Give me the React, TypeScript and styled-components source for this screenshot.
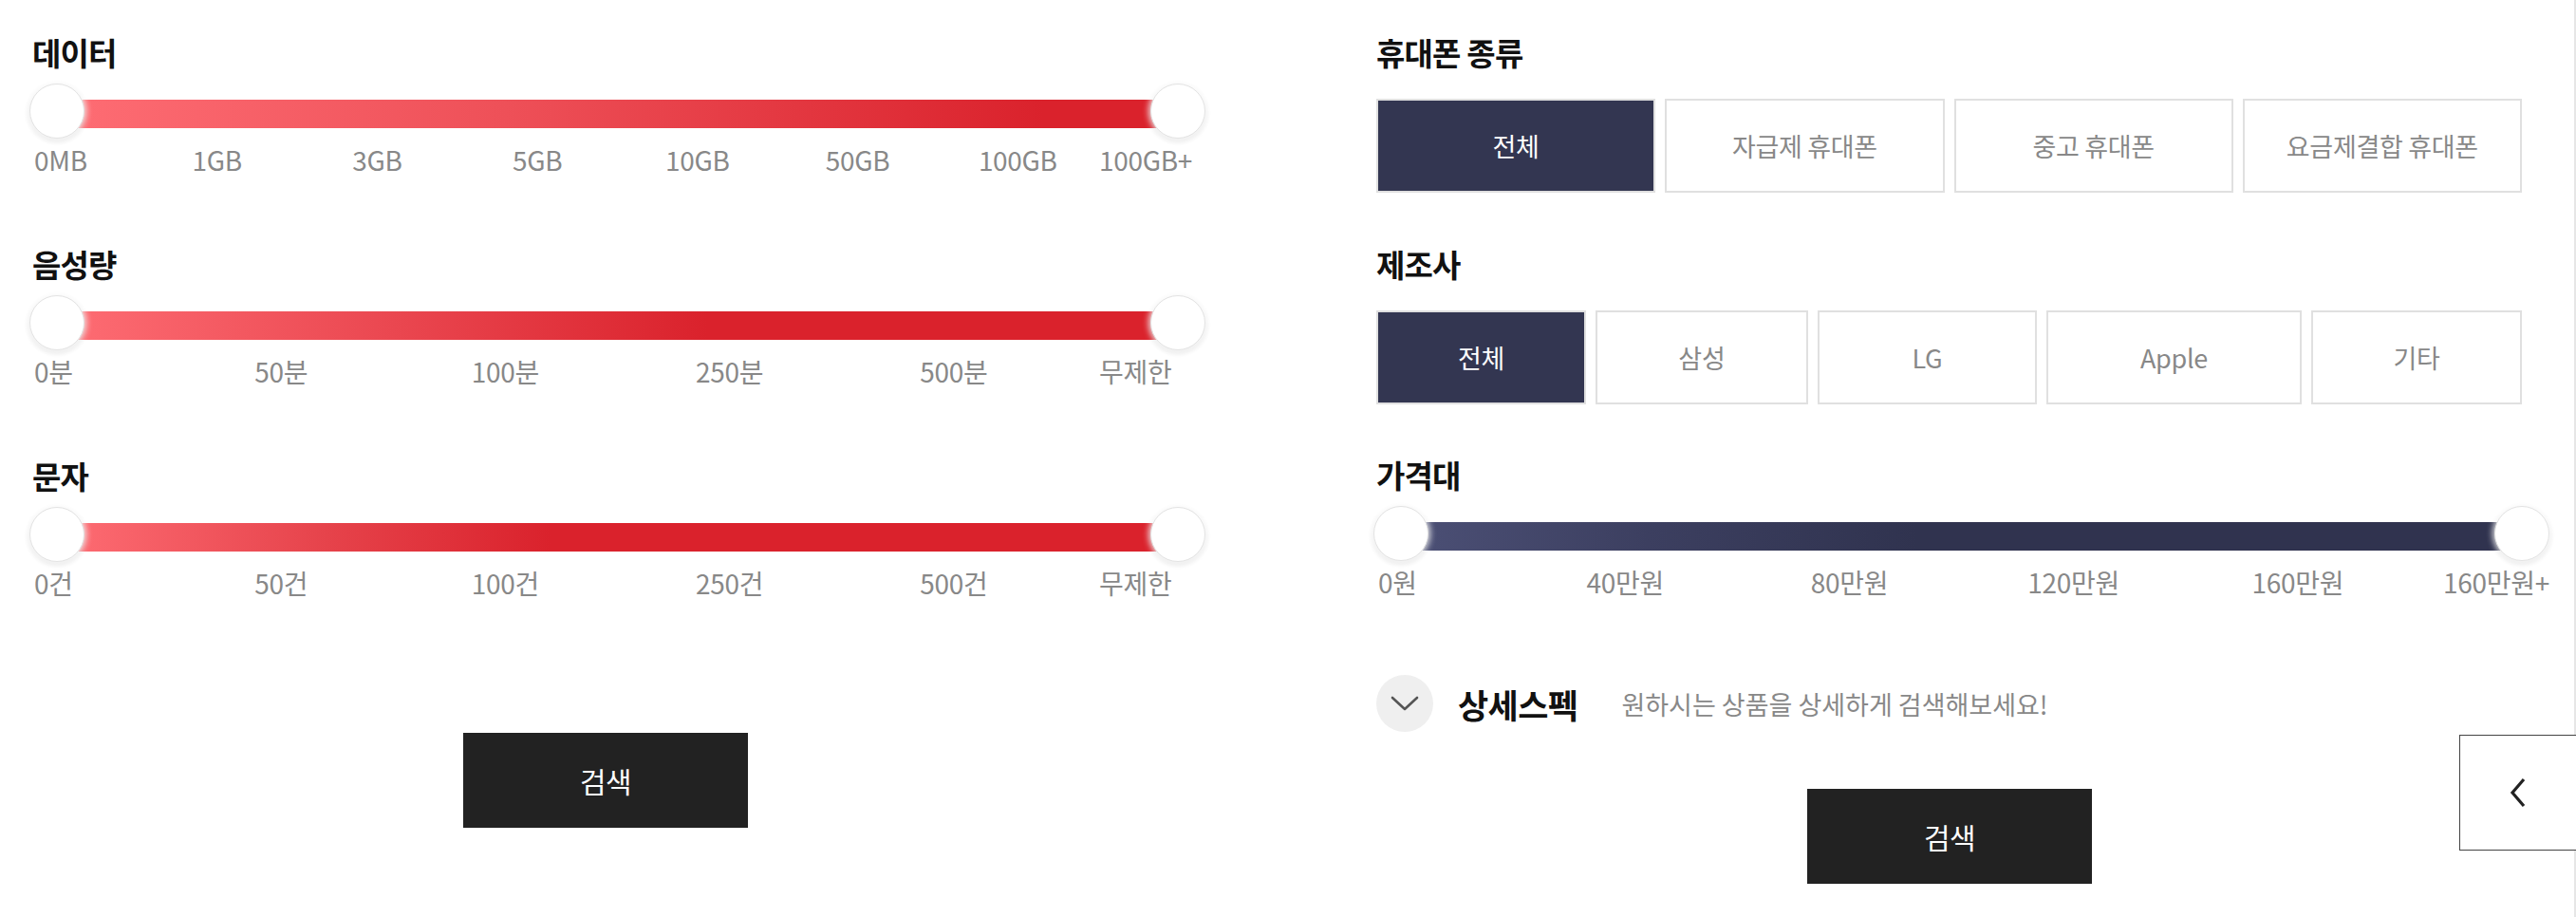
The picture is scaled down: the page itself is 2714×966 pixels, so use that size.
import React from 'react';
import styled, { createGlobalStyle } from 'styled-components';

const GlobalStyle = createGlobalStyle`
  html, body {
    margin: 0;
    padding: 0;
    background: #fff;
  }
  body {
    font-family: 'Noto Sans CJK KR', 'Noto Sans', sans-serif;
    color: #111;
  }
  * {
    box-sizing: border-box;
  }
`;

const TRACK_WIDTH = 1239;
const THUMB = 58;

interface SliderData {
  title: string;
  labels: string[];
  fill: string;
}

const lineSliders: SliderData[] = [
  {
    title: '데이터',
    labels: ['0MB', '1GB', '3GB', '5GB', '10GB', '50GB', '100GB', '100GB+'],
    fill: 'linear-gradient(90deg, #fe6d74 0%, #ee5058 40%, #da222c 88%)',
  },
  {
    title: '음성량',
    labels: ['0분', '50분', '100분', '250분', '500분', '무제한'],
    fill: 'linear-gradient(90deg, #fe6d74 0%, #ea4750 30%, #da222c 58%)',
  },
  {
    title: '문자',
    labels: ['0건', '50건', '100건', '250건', '500건', '무제한'],
    fill: 'linear-gradient(90deg, #fe6d74 0%, #e6434b 24%, #da222c 44%)',
  },
];

const priceSlider: SliderData = {
  title: '가격대',
  labels: ['0원', '40만원', '80만원', '120만원', '160만원', '160만원+'],
  fill: 'linear-gradient(90deg, #4c5076 0%, #3c3f60 22%, #30334f 46%)',
};

const phoneTypes = ['전체', '자급제 휴대폰', '중고 휴대폰', '요금제결합 휴대폰'];
const makers = ['전체', '삼성', 'LG', 'Apple', '기타'];

const Page = styled.div`
  display: flex;
  width: 2714px;
  height: 966px;
  overflow: hidden;
  padding: 35px 0 0 34px;
  border-right: 2px solid #e6e6e6;
`;

const Column = styled.section<{ $gapRight?: number }>`
  width: 1208px;
  display: flex;
  flex-direction: column;
  margin-right: ${(p) => p.$gapRight ?? 0}px;
`;

const FilterBlock = styled.div<{ $after?: number }>`
  display: flex;
  flex-direction: column;
  margin-bottom: ${(p) => p.$after ?? 0}px;
`;

const Title = styled.h3`
  margin: 0;
  font-size: 33px;
  line-height: 40px;
  font-weight: 700;
  letter-spacing: -0.8px;
  color: #111;
`;

const Track = styled.div`
  display: flex;
  align-items: center;
  width: ${TRACK_WIDTH}px;
  height: ${THUMB}px;
  margin: 13px 0 0 -3px;
`;

const Bar = styled.div<{ $fill: string }>`
  flex: 1;
  height: 30px;
  margin: 6px -${THUMB / 2}px 0;
  background: ${(p) => p.$fill};
`;

const Thumb = styled.span`
  position: relative;
  z-index: 1;
  flex: none;
  width: ${THUMB}px;
  height: ${THUMB}px;
  border-radius: 50%;
  background: #fff;
  border: 1px solid #e3e3e3;
  box-shadow: 0 0 6px 2px rgba(255, 255, 255, 0.85),
    0 2px 5px 1px rgba(0, 0, 0, 0.14);
`;

const Scale = styled.div`
  position: relative;
  width: ${TRACK_WIDTH}px;
  height: 34px;
  margin: 5px 0 0 -3px;
`;

const Tick = styled.span<{ $mid: boolean }>`
  position: absolute;
  top: 0;
  font-size: 28px;
  line-height: 34px;
  letter-spacing: -0.3px;
  color: #888;
  white-space: nowrap;
  transform: ${(p) => (p.$mid ? 'translateX(-50%)' : 'none')};
`;

const OptionRow = styled.div<{ $cols: string }>`
  display: grid;
  grid-template-columns: ${(p) => p.$cols};
  gap: 10px;
  width: 1207px;
  margin-top: 29px;
`;

const Option = styled.button<{ $active?: boolean }>`
  height: 99px;
  padding: 0;
  border: 2px solid #e0e0e0;
  background: ${(p) => (p.$active ? '#333651' : '#fff')};
  color: ${(p) => (p.$active ? '#fff' : '#888')};
  font-family: inherit;
  font-size: 27px;
  letter-spacing: -0.3px;
  cursor: pointer;
`;

const SpecRow = styled.div`
  display: flex;
  align-items: center;
  margin-top: 81px;
`;

const SpecToggle = styled.button`
  display: flex;
  align-items: center;
  justify-content: center;
  width: 60px;
  height: 60px;
  padding: 0;
  border: 0;
  border-radius: 50%;
  background: #efefef;
`;

const SpecTitle = styled.strong`
  margin-left: 26px;
  font-size: 35px;
  font-weight: 700;
  letter-spacing: -0.6px;
  color: #111;
`;

const SpecHint = styled.span`
  margin-left: 46px;
  font-size: 27px;
  letter-spacing: 0;
  color: #888;
`;

const SearchButton = styled.button<{ $top: number }>`
  align-self: center;
  width: 300px;
  height: 100px;
  margin-top: ${(p) => p.$top}px;
  border: 0;
  background: #222;
  color: #fff;
  font-family: inherit;
  font-size: 30px;
  letter-spacing: -0.5px;
`;

const SideTab = styled.button`
  position: fixed;
  top: 774px;
  right: 0;
  width: 123px;
  height: 122px;
  display: flex;
  align-items: center;
  justify-content: center;
  padding: 0;
  border: 1px solid #444;
  border-right: 0;
  background: #fff;
`;

const RangeSlider = ({ data }: { data: SliderData }) => {
  const last = data.labels.length - 1;
  const step = (TRACK_WIDTH - THUMB) / last;
  const tickLeft = (idx: number) => {
    const center = THUMB / 2 + idx * step;
    if (idx === 0) return center - 24;
    if (idx === last) return center - 83;
    return center;
  };

  return (
    <>
      <Title>{data.title}</Title>
      <Track>
        <Thumb />
        <Bar $fill={data.fill} />
        <Thumb />
      </Track>
      <Scale>
        {data.labels.map((label, idx) => (
          <Tick
            key={label + idx}
            $mid={idx !== 0 && idx !== last}
            style={{ left: tickLeft(idx) }}
          >
            {label}
          </Tick>
        ))}
      </Scale>
    </>
  );
};

const App = () => {
  return (
    <>
      <GlobalStyle />
      <Page>
        <Column $gapRight={208}>
          {lineSliders.map((it, idx) => (
            <FilterBlock key={it.title} $after={idx < lineSliders.length - 1 ? 73 : 0}>
              <RangeSlider data={it} />
            </FilterBlock>
          ))}
          <SearchButton $top={141}>검색</SearchButton>
        </Column>

        <Column>
          <FilterBlock $after={55}>
            <Title>휴대폰 종류</Title>
            <OptionRow $cols="repeat(4, 1fr)">
              {phoneTypes.map((it, idx) => (
                <Option key={it} $active={idx === 0}>
                  {it}
                </Option>
              ))}
            </OptionRow>
          </FilterBlock>
          <FilterBlock $after={54}>
            <Title>제조사</Title>
            <OptionRow $cols="220fr 223fr 230fr 268fr 221fr">
              {makers.map((it, idx) => (
                <Option key={it} $active={idx === 0}>
                  {it}
                </Option>
              ))}
            </OptionRow>
          </FilterBlock>
          <FilterBlock>
            <RangeSlider data={priceSlider} />
          </FilterBlock>
          <SpecRow>
            <SpecToggle aria-label="상세스펙 열기">
              <svg width="30" height="16" viewBox="0 0 30 16" fill="none">
                <polyline
                  points="2,2 15,14 28,2"
                  stroke="#555"
                  strokeWidth="2.6"
                  strokeLinecap="round"
                  strokeLinejoin="round"
                />
              </svg>
            </SpecToggle>
            <SpecTitle>상세스펙</SpecTitle>
            <SpecHint>원하시는 상품을 상세하게 검색해보세요!</SpecHint>
          </SpecRow>
          <SearchButton $top={60}>검색</SearchButton>
        </Column>
      </Page>
      <SideTab aria-label="닫기">
        <svg width="20" height="32" viewBox="0 0 20 32" fill="none">
          <polyline
            points="16,2 4,16 16,30"
            stroke="#222"
            strokeWidth="3.2"
            strokeLinejoin="miter"
          />
        </svg>
      </SideTab>
    </>
  );
};

export default App;
